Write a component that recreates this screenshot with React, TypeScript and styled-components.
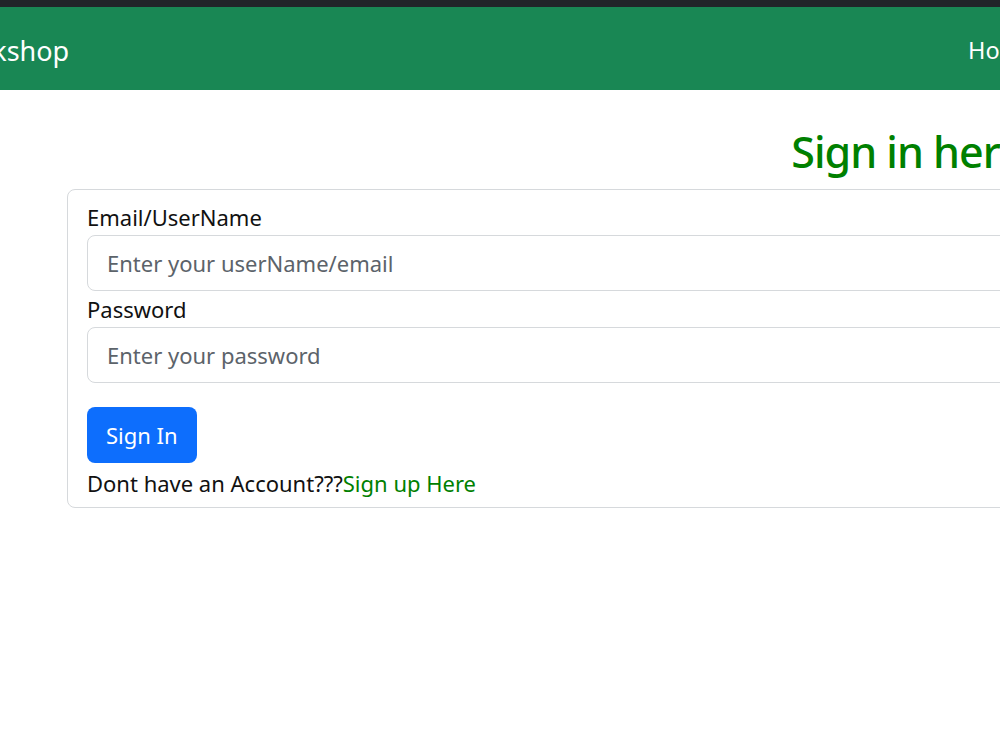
import React from 'react'
import styled, {createGlobalStyle} from 'styled-components'

const GlobalStyle = createGlobalStyle`
    html, body {
        margin: 0;
        padding: 0;
        background: #ffffff;
    }
    body {
        overflow: hidden;
        font-family: "Noto Sans", "Open Sans", sans-serif;
        color: #212529;
    }
    * {
        box-sizing: border-box;
    }
`

// the window is scrolled a little to the right, so the page starts off-screen
const Viewport = styled.div`
    width: 1000px;
    height: 750px;
    overflow: hidden;
`

const Page = styled.div`
    width: 1900px;
    margin-left: -66px;
`

const TopStrip = styled.div`
    height: 7px;
    background: #212529;
`

const Navbar = styled.nav`
    height: 83px;
    display: flex;
    align-items: center;
    padding: 6px 16px 0 8px;
    background: #198754;
`

const Brand = styled.a`
    flex: 0 0 1015px;
    font-size: 27px;
    line-height: 1.5;
    color: #ffffff;
    text-decoration: none;
`

const NavList = styled.ul`
    display: flex;
    margin: 0;
    padding: 0;
    list-style: none;

    li a {
        display: block;
        padding: 10px 11px 12px;
        font-size: 23.5px;
        line-height: 1.5;
        color: #ffffff;
        text-decoration: none;
    }
`

const Main = styled.main`
    width: 1710px;
    margin-left: 133px;
`

const Title = styled.h2`
    margin: 36px 0 11px;
    padding-right: 30px;
    font-size: 43px;
    font-weight: 500;
    letter-spacing: -1px;
    line-height: 1.2;
    text-align: center;
    color: #008000;
`

const Card = styled.form`
    border: 1px solid #d6d9dc;
    border-radius: 8px;
    padding: 9px 19px 6px;
`

const Label = styled.label`
    display: block;
    font-size: 22px;
    line-height: 36px;
    color: #111111;
`

const Input = styled.input`
    display: block;
    width: 100%;
    height: 56px;
    padding: 0 19px;
    border: 1px solid #d6d9dc;
    border-radius: 8px;
    font-family: inherit;
    font-size: 22px;
    color: #212529;
    outline: none;

    &::placeholder {
        color: #5c636a;
    }
`

const Button = styled.button`
    display: block;
    height: 56px;
    margin-top: 24px;
    padding: 0 19px;
    border: none;
    border-radius: 8px;
    background: #0d6efd;
    color: #ffffff;
    font-family: inherit;
    font-size: 22px;
    cursor: pointer;
`

const Footnote = styled.p`
    margin: 2px 0 0;
    font-size: 22px;
    line-height: 36px;
    color: #111111;

    a {
        color: #008000;
        text-decoration: none;
    }
`

export default function App () {
    return (
        <Viewport>
            <GlobalStyle />
            <Page>
                <TopStrip />
                <Navbar>
                    <Brand href="#">Bookshop</Brand>
                    <NavList>
                        <li><a href="#">Home</a></li>
                        <li><a href="#">Books</a></li>
                    </NavList>
                </Navbar>
                <Main>
                    <Title>Sign in here</Title>
                    <Card onSubmit={e => e.preventDefault()}>
                        <Label htmlFor="user">Email/UserName</Label>
                        <Input id="user" type="text" placeholder="Enter your userName/email" />
                        <Label htmlFor="pass">Password</Label>
                        <Input id="pass" type="password" placeholder="Enter your password" />
                        <Button type="submit">Sign In</Button>
                        <Footnote>
                            Dont have an Account???<a href="#">Sign up Here</a>
                        </Footnote>
                    </Card>
                </Main>
            </Page>
        </Viewport>
    )
}
